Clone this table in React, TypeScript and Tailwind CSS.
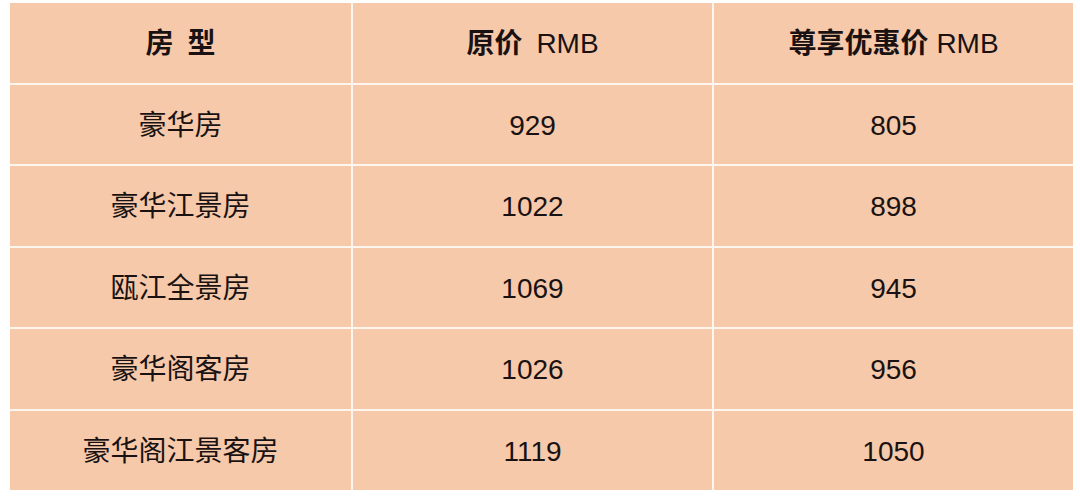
const rows = [
  { name: '豪华房', price: '929', deal: '805' },
  { name: '豪华江景房', price: '1022', deal: '898' },
  { name: '瓯江全景房', price: '1069', deal: '945' },
  { name: '豪华阁客房', price: '1026', deal: '956' },
  { name: '豪华阁江景客房', price: '1119', deal: '1050' },
];

const cell = 'flex h-[79.5px] items-center justify-center bg-[#f5c9aa] pt-[3px] text-[28px] text-[#1a1212]';

export default function App() {
  return (
    <div className="min-h-screen bg-white pl-[10px] pt-[3px] font-['Liberation_Sans','Noto_Sans_CJK_SC',sans-serif]">
      <div className="grid w-[1063px] grid-cols-[341px_359px_359px] gap-[2px] bg-[#fdf6ef]">
        <div className={cell}>
          <span className="font-bold">房</span>
          <span className="ml-[14px] font-bold">型</span>
        </div>
        <div className={cell}>
          <span className="font-bold">原价</span>
          <span className="ml-[14px]">RMB</span>
        </div>
        <div className={cell}>
          <span className="font-bold">尊享优惠价</span>
          <span className="ml-[8px]">RMB</span>
        </div>
        {rows.map((row) => (
          <div key={row.name} className="contents">
            <div className={cell}>{row.name}</div>
            <div className={cell}>{row.price}</div>
            <div className={cell}>{row.deal}</div>
          </div>
        ))}
      </div>
    </div>
  );
}
